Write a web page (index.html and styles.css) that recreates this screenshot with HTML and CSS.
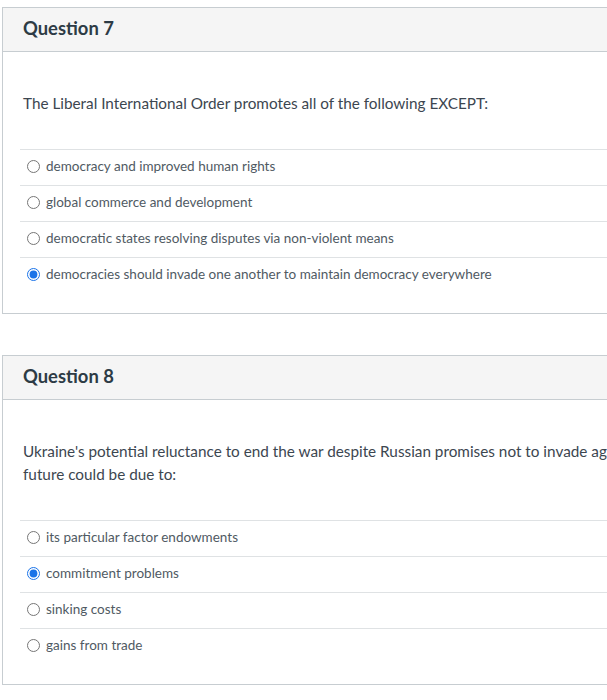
FILE: index.html
```html
<!DOCTYPE html>
<html>
<head>
<meta charset="utf-8">
<link rel="stylesheet" href="styles.css">
</head>
<body>
<div class="page">
  <section class="card">
    <div class="card-header"><h2 class="title">Question 7</h2></div>
    <div class="card-body">
      <p class="question">The Liberal International Order promotes all of the following EXCEPT:</p>
      <div class="answers">
        <label class="answer"><input type="radio" name="q7"><span>democracy and improved human rights</span></label>
        <label class="answer"><input type="radio" name="q7"><span>global commerce and development</span></label>
        <label class="answer"><input type="radio" name="q7"><span>democratic states resolving disputes via non-violent means</span></label>
        <label class="answer"><input type="radio" name="q7" checked><span>democracies should invade one another to maintain democracy everywhere</span></label>
      </div>
    </div>
  </section>
  <section class="card">
    <div class="card-header"><h2 class="title">Question 8</h2></div>
    <div class="card-body">
      <p class="question">Ukraine's potential reluctance to end the war despite Russian promises not to invade again in the future could be due to:</p>
      <div class="answers">
        <label class="answer"><input type="radio" name="q8"><span>its particular factor endowments</span></label>
        <label class="answer"><input type="radio" name="q8" checked><span>commitment problems</span></label>
        <label class="answer"><input type="radio" name="q8"><span>sinking costs</span></label>
        <label class="answer"><input type="radio" name="q8"><span>gains from trade</span></label>
      </div>
    </div>
  </section>
</div>
</body>
</html>
```

FILE: styles.css
```css
html, body {
  margin: 0;
  padding: 0;
  background: #ffffff;
  overflow: hidden;
}
body {
  font-family: Lato, "Liberation Sans", sans-serif;
  color: #2d3b45;
}
.page {
  padding: 7px 0 0 2px;
  display: flex;
  flex-direction: column;
  gap: 41px;
}
.card {
  width: 700px;
  border: 1px solid #c7cdd1;
  background: #fff;
}
.card-header {
  height: 43px;
  background: #f5f5f5;
  border-bottom: 1px solid #c7cdd1;
  display: flex;
  align-items: center;
  padding: 0 20px;
}
.title {
  margin: 0 0 3px;
  font-size: 18.4px;
  font-weight: 700;
  color: #2d3b45;
}
.card-body {
  padding: 40px 20px 20px;
}
.question {
  margin: 0 0 34px;
  font-size: 15.3px;
  line-height: 23px;
  color: #3c4650;
}
.answers {
  display: flex;
  flex-direction: column;
  margin-left: -3px;
}
.answer {
  display: flex;
  align-items: center;
  height: 32px;
  padding-bottom: 3px;
  border-top: 1px solid #dfe2e4;
  font-size: 13.5px;
  color: #505a63;
  padding-left: 7px;
}
.answer input {
  margin: 0 6px 0 0;
  width: 13px;
  height: 13px;
  accent-color: #1a73e8;
}
```
